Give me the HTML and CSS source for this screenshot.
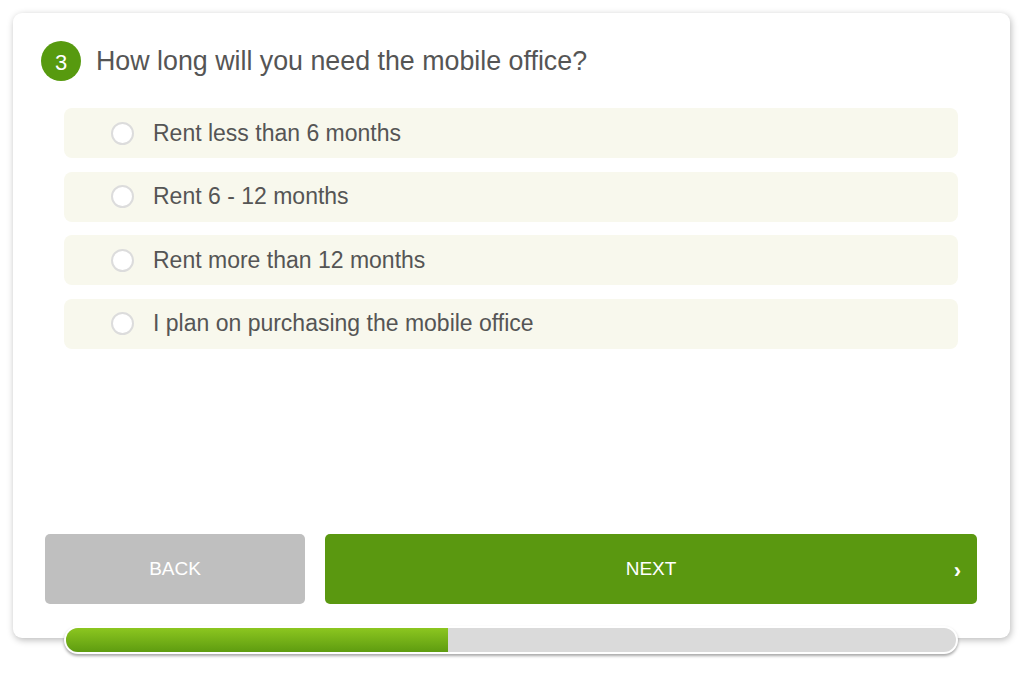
FILE: index.html
```html
<!DOCTYPE html>
<html lang="en">
<head>
<meta charset="utf-8">
<title>Mobile office quiz</title>
<link rel="stylesheet" href="styles.css">
</head>
<body>
<div class="page">
  <div class="card">
    <div class="question">
      <span class="badge">3</span>
      <h1 class="title">How long will you need the mobile office?</h1>
    </div>
    <ul class="options">
      <li class="option"><span class="radio"></span><span class="label">Rent less than 6 months</span></li>
      <li class="option"><span class="radio"></span><span class="label">Rent 6 - 12 months</span></li>
      <li class="option"><span class="radio"></span><span class="label">Rent more than 12 months</span></li>
      <li class="option"><span class="radio"></span><span class="label">I plan on purchasing the mobile office</span></li>
    </ul>
    <div class="actions">
      <button class="btn btn-back">BACK</button>
      <button class="btn btn-next"><span></span><span class="btn-text">NEXT</span><span class="arrow">›</span></button>
    </div>
  </div>
  <div class="progress"><div class="progress-fill" style="width: 42.9%"></div></div>
</div>
</body>
</html>
```
FILE: styles.css
```css
* { box-sizing: border-box; }
html, body { margin: 0; padding: 0; background: #fff; }
body { font-family: "Liberation Sans", Arial, sans-serif; color: #555; }

.page {
  width: 1024px;
  height: 675px;
  padding: 13px 14px 0 13px;
}

.card {
  width: 997px;
  height: 625px;
  background: #fff;
  border-radius: 9px;
  box-shadow: 1px 2px 7px rgba(0,0,0,0.28);
  padding: 28px 33px 34px 32px;
  display: flex;
  flex-direction: column;
}

.question {
  display: flex;
  align-items: center;
  gap: 15px;
  margin-left: -4px;
}
.badge {
  width: 40px;
  height: 40px;
  border-radius: 50%;
  background: #579a0f;
  color: #fff;
  font-size: 22px;
  display: flex;
  align-items: center;
  justify-content: center;
  padding-top: 3px;
}
.title {
  margin: 0;
  font-weight: normal;
  font-size: 26.8px;
  color: #555;
  line-height: 40px;
}

.options {
  list-style: none;
  margin: 27px 19px 0 19px;
  padding: 0;
  display: flex;
  flex-direction: column;
  gap: 13.5px;
}
.option {
  height: 50px;
  background: #f8f8ed;
  border-radius: 8px;
  display: flex;
  align-items: center;
  padding-left: 47px;
}
.radio {
  width: 23px;
  height: 23px;
  border-radius: 50%;
  border: 2px solid #dcdcdc;
  background: #fff;
  margin-right: 19px;
  flex: none;
}
.label {
  font-size: 23px;
  color: #555;
}

.actions {
  margin-top: auto;
  display: flex;
  gap: 20px;
  height: 70px;
}
.btn {
  border: none;
  border-radius: 5px;
  color: #fff;
  font-family: "Liberation Sans", Arial, sans-serif;
  font-size: 19px;
  height: 70px;
  padding: 0;
}
.btn-back {
  width: 260px;
  background: #bfbfbf;
}
.btn-next {
  flex: 1;
  background: #5a9810;
  display: grid;
  grid-template-columns: 1fr auto 1fr;
  align-items: center;
}
.arrow {
  justify-self: end;
  margin-right: 16px;
  font-size: 22px;
  font-weight: bold;
  padding-top: 3px;
}

.progress {
  position: relative;
  width: 894px;
  height: 28px;
  margin: -12px 0 0 51px;
  border: 2px solid #fff;
  border-radius: 14px;
  background: #dadada;
  box-shadow: 0 2px 3px rgba(0,0,0,0.35);
  overflow: hidden;
}
.progress-fill {
  height: 100%;
  background: linear-gradient(to bottom, #8cc620, #5e9c10);
}
```
